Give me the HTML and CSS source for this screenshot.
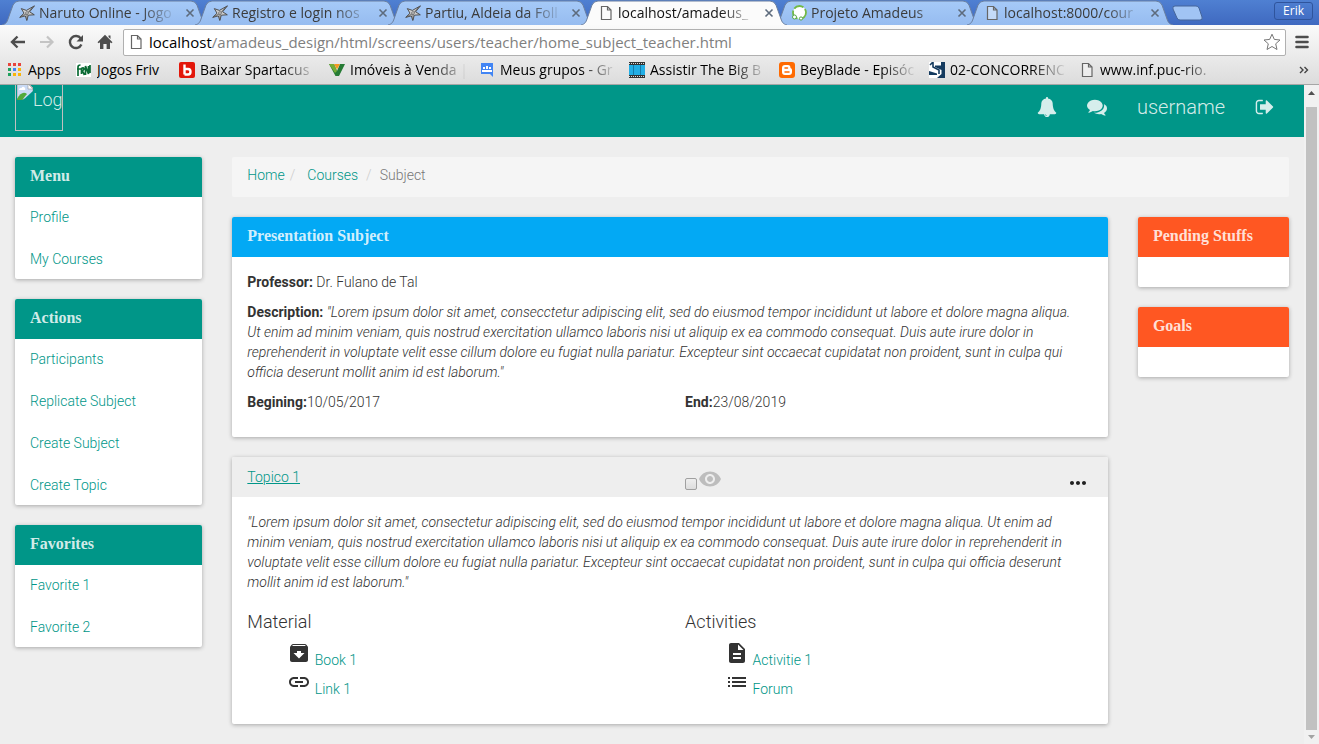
FILE: index.html
```html
<!DOCTYPE html>
<html lang="en">
<head>
<meta charset="utf-8">
<title>Home Subject Teacher</title>
<link rel="stylesheet" href="styles.css">
</head>
<body>
<svg class="defs" aria-hidden="true">
  <defs>
    <linearGradient id="tabfill" x1="0" y1="0" x2="0" y2="1"><stop offset="0" stop-color="#a6caf8"/><stop offset="1" stop-color="#96bcf0"/></linearGradient>
    <symbol id="tabshape" viewBox="0 0 206 25" preserveAspectRatio="none"><path d="M0 25C4 24 5 22 6 19L11 5Q13 1 17 1H189Q193 1 195 5L200 19C201 22 202 24 206 25"/></symbol>
    <symbol id="shuriken" viewBox="0 0 16 16"><path d="M15.500.8L10.600 6.800 15.300 9.800 9.300 10.200 7.800 15.500 6.300 10.900.700 12.400 5 8.200 2.300 3.600 7.400 5.400Z" fill="#ccc" stroke="#444" stroke-width=".9"/><path d="M15 1L8 8.500M8 15V9M1 12l6-3" stroke="#555" stroke-width=".8" fill="none"/><circle cx="8" cy="8" r="1.300" fill="#eee" stroke="#333" stroke-width=".6"/></symbol>
    <symbol id="page" viewBox="0 0 16 16"><path d="M3.500 1.500H9.500L13 5V14.500H3.500ZM9.500 1.500V5H13" fill="#fff" fill-opacity=".4" stroke="#666" stroke-width="1.200"/></symbol>
    <symbol id="close" viewBox="0 0 10 10"><path d="M1.500 1.500l7 7m0-7l-7 7" stroke="#5d6b7d" stroke-width="1.600"/></symbol>
  </defs>
</svg>

<header class="browser">
  <nav class="tabs">
    <div class="tab"><svg class="shape"><use href="#tabshape"/></svg><svg class="fav"><use href="#shuriken"/></svg><span class="tab-title">Naruto Online - Jogo</span><button class="close" aria-label="Close tab"><svg><use href="#close"/></svg></button></div>
    <div class="tab"><svg class="shape"><use href="#tabshape"/></svg><svg class="fav"><use href="#shuriken"/></svg><span class="tab-title">Registro e login nos</span><button class="close" aria-label="Close tab"><svg><use href="#close"/></svg></button></div>
    <div class="tab"><svg class="shape"><use href="#tabshape"/></svg><svg class="fav"><use href="#shuriken"/></svg><span class="tab-title">Partiu, Aldeia da Foll</span><button class="close" aria-label="Close tab"><svg><use href="#close"/></svg></button></div>
    <div class="tab active"><svg class="shape"><use href="#tabshape"/></svg><svg class="fav"><use href="#page"/></svg><span class="tab-title">localhost/amadeus_</span><button class="close" aria-label="Close tab"><svg><use href="#close"/></svg></button></div>
    <div class="tab"><svg class="shape"><use href="#tabshape"/></svg><svg class="fav" viewBox="0 0 16 16"><circle cx="8.500" cy="7.500" r="6.500" fill="#fff" stroke="#72b944" stroke-width="1.800" stroke-dasharray="10 2"/><circle cx="3.500" cy="12" r="2" fill="#fff" stroke="#58a94b"/><circle cx="10" cy="13.500" r="1.600" fill="#fff" stroke="#58a94b"/></svg><span class="tab-title">Projeto Amadeus</span><button class="close" aria-label="Close tab"><svg><use href="#close"/></svg></button></div>
    <div class="tab"><svg class="shape"><use href="#tabshape"/></svg><svg class="fav"><use href="#page"/></svg><span class="tab-title">localhost:8000/cour</span><button class="close" aria-label="Close tab"><svg><use href="#close"/></svg></button></div>
    <button class="newtab" aria-label="New tab"><svg viewBox="0 0 32 16"><path d="M3 1H24Q26 1 27 3L30 12Q31 15 28 15H8Q6 15 5 13L1 4Q0 1 3 1Z" fill="#a1c4f4" stroke="#45659a"/></svg></button>
    <button class="user">Erik</button>
  </nav>
  <div class="toolbar">
    <button class="tool" aria-label="Back"><svg viewBox="0 0 16 16"><path d="M15 8H2.500M7.500 2.500L2 8 7.500 13.500" fill="none" stroke="#4d4d4d" stroke-width="2.400"/></svg></button>
    <button class="tool" aria-label="Forward"><svg viewBox="0 0 16 16"><path d="M1 8H13M8 2.500L13.500 8 8 13.500" fill="none" stroke="#c4c4c4" stroke-width="2.200"/></svg></button>
    <button class="tool" aria-label="Reload"><svg viewBox="0 0 16 16"><path d="M12.800 4.500A6 6 0 1 0 13.400 10.500" fill="none" stroke="#4d4d4d" stroke-width="2.400"/><path d="M15 1V7.500H8.500Z" fill="#4d4d4d"/></svg></button>
    <button class="tool" aria-label="Home"><svg viewBox="0 0 16 16"><path d="M8 .8L15.500 8.200 14.300 9.300 13 8.200V15H9.600V10H6.400V15H3V8.200L1.700 9.300.500 8.200ZM11.500 1.500H13.500V5L11.500 3Z" fill="#4d4d4d"/></svg></button>
    <div class="omnibox">
      <svg class="fav"><use href="#page"/></svg>
      <label class="host" for="url">localhost</label>
      <input id="url" class="url" type="text" spellcheck="false" value="/amadeus_design/html/screens/users/teacher/home_subject_teacher.html">
      <button class="star" aria-label="Bookmark"><svg viewBox="0 0 18 18"><path d="M9 1.200L11.300 6.400 17 7 12.700 10.800 14 16.500 9 13.500 4 16.500 5.300 10.800 1 7 6.700 6.400Z" fill="#fff" stroke="#777"/></svg></button>
    </div>
    <button class="tool menu" aria-label="Menu"><svg viewBox="0 0 14 14"><path d="M1.500 2H12.500M1.500 7H12.500M1.500 12H12.500" stroke="#4d4d4d" stroke-width="2.600" stroke-linecap="round"/></svg></button>
  </div>
  <nav class="bookmarks">
    <a href="#" class="bm apps"><svg class="fav" viewBox="0 0 16 16"><path d="M1 1h3v3H1zM6 1h3v3H6zM11 1h3v3h-3z" fill="#e8453c"/><path d="M1 6h3v3H1zM1 11h3v3H1z" fill="#1fa15d"/><path d="M6 6h3v3H6z" fill="#4285f4"/><path d="M11 6h3v3h-3zM6 11h3v3H6zM11 11h3v3h-3z" fill="#f9b50b"/></svg><span>Apps</span></a>
    <a href="#" class="bm friv"><svg class="fav" viewBox="0 0 16 16"><path fill="#fff" d="M0 1h15v14H0z"/><path d="M2 14V5Q2 3 4.500 3M1 7H5M5.500 12V6.500Q7.500 5 8 7L6.500 9 8.500 13M9.500 13V4L12.500 12V4M14 3V11" fill="none" stroke="#0b6b35" stroke-width="1.700"/></svg><span>Jogos Friv</span></a>
    <a href="#" class="bm"><svg class="fav" viewBox="0 0 16 16"><rect width="16" height="16" rx="2" fill="#e3170a"/><path d="M5.500 2.500V12.500M5.500 7H9Q11.500 7 11.500 9.700T9 12.500H5.500" fill="none" stroke="#fff" stroke-width="2.400"/></svg><span>Baixar Spartacus</span></a>
    <a href="#" class="bm"><svg class="fav" viewBox="0 0 16 16"><path d="M0 2H5L8 9 11 2H16L10 14H6.500Z" fill="#267b35"/><path d="M0 2H5L8 9 6 11Z" fill="#74ad35"/><path d="M5 2H11L8 7.500Z" fill="#f39a21"/></svg><span>Imóveis à Venda |</span></a>
    <a href="#" class="bm"><svg class="fav" viewBox="0 0 16 16"><path d="M2 1H14V15L11 12H2Z" fill="#4285f4"/><path d="M4 5h2v2H4zM7 4h2v3H7zM10 5h2v2h-2zM3 8h10v2H3z" fill="#fff"/></svg><span>Meus grupos - Gr</span></a>
    <a href="#" class="bm"><svg class="fav" viewBox="0 0 16 16"><path d="M0 0H16V16H0Z" fill="#333"/><path d="M0 3H16V13H0Z" fill="#22aee5"/><path d="M0 1.500H16M0 14.500H16" stroke="#ddd" stroke-dasharray="1 1"/><path d="M4.500 3V13M11.500 3V13" stroke="#147aa9"/></svg><span>Assistir The Big B</span></a>
    <a href="#" class="bm"><svg class="fav" viewBox="0 0 16 16"><rect width="16" height="16" rx="3" fill="#ff6a00"/><path d="M6 3H9Q11.500 3 11.500 6 13 6.500 13 8V10Q13 13 10 13H6Q3 13 3 10V6Q3 3 6 3Z" fill="#fff"/><path d="M6 6H8.500M6 10H10" stroke="#ff6a00" stroke-width="1.500" stroke-linecap="round"/></svg><span>BeyBlade - Episóc</span></a>
    <a href="#" class="bm"><svg class="fav" viewBox="0 0 16 16"><path d="M0 0H16V16H0Z" fill="#fff"/><path d="M12 0h4v16H8L12.500 12V8L6 5V3.500H12ZM0 9L8 11.500V13H0Z" fill="#143a5e"/><path d="M1 3L4 0v5l6 3v4" fill="none" stroke="#143a5e" stroke-width="1.600"/></svg><span>02-CONCORRENC</span></a>
    <a href="#" class="bm"><svg class="fav"><use href="#page"/></svg><span>www.inf.puc-rio.</span></a>
    <button class="more" aria-label="More bookmarks"><svg viewBox="0 0 10 8"><path d="M1 1l3 3-3 3M5.500 1l3 3-3 3" fill="none" stroke="#444" stroke-width="1.400"/></svg></button>
  </nav>
</header>

<div class="viewport">
  <div class="page">
    <header class="navbar">
      <a class="logo" href="#" aria-label="Logo"><svg viewBox="0 0 16 16"><path d="M0-2H11L16 3V14H0Z" fill="#c9daf5" stroke="#aaa"/><path d="M2 5Q2 2.500 4.500 3 6 .500 8 3 9 5 7 5Z" fill="#fff"/><path d="M0 14Q5 5 10 9L5 15H0Z" fill="#52a93c"/><path d="M5 16L16 6V16Z" fill="#009688"/><path d="M11-1V4H16Z" fill="#fff" stroke="#999" stroke-width=".6"/></svg><span>Log</span></a>
      <nav class="navlinks">
        <a href="#" aria-label="Notifications"><svg viewBox="0 0 1792 1792"><path d="M912 1696q0-16-16-16-59 0-101.500-42.500t-42.500-101.500q0-16-16-16t-16 16q0 73 51.500 124.500t124.500 51.500q16 0 16-16zm816-288q0 52-38 90t-90 38h-448q0 106-75 181t-181 75-181-75-75-181h-448q-52 0-90-38t-38-90q50-42 91-88t85-119.500 74.500-158.500 50-206 19.500-260q0-152 117-282.500t307-158.500q-8-19-8-39 0-40 28-68t68-28 68 28 28 68q0 20-8 39 190 28 307 158.500t117 282.500q0 139 19.500 260t50 206 74.500 158.500 85 119.500 91 88z"/></svg></a>
        <a href="#" aria-label="Messages"><svg viewBox="0 0 1792 1792"><path d="M1408 768q0 139-94 257t-256.500 186.500-353.500 68.500q-86 0-176-16-124 88-278 128-36 9-86 16h-3q-11 0-20.500-8t-11.500-21q-1-3-1-6.500t.5-6.500 2-6l2.500-5 3.500-5.500 4-5 4.500-5 4-4.500q5-6 23-25t26-29.500 22.500-29 25-38.500 20.500-44q-124-72-195-177t-71-224q0-139 94-257t256.500-186.500 353.500-68.500 353.500 68.500 256.500 186.500 94 257zm384 256q0 120-71 224.500t-195 176.500q10 24 20.500 44t25 38.500 22.500 29 26 29.500 23 25q1 1 4 4.500t4.500 5 4 5 3.500 5.500l2.500 5 2 6 .5 6.500-1 6.500q-3 14-13 22t-22 7q-50-7-86-16-154-40-278-128-90 16-176 16-271 0-472-132 58 4 88 4 161 0 309-45t264-129q125-92 192-212t67-254q0-77-23-152 129 71 204 178t75 230z"/></svg></a>
        <a href="#">username</a>
        <a href="#" aria-label="Sign out"><svg viewBox="0 0 1792 1792"><path d="M704 1440q0 4 1 20t.5 26.500-3 23.500-10 19.500-20.500 6.500h-320q-119 0-203.500-84.500t-84.500-203.500v-704q0-119 84.500-203.500t203.500-84.500h320q13 0 22.500 9.500t9.500 22.500q0 4 1 20t.5 26.500-3 23.500-10 19.500-20.500 6.500h-320q-66 0-113 47t-47 113v704q0 66 47 113t113 47h312l11.500 1 11.500 3 8 5.500 7 9 2 13.500zm928-544q0 26-19 45l-544 544q-19 19-45 19t-45-19-19-45v-288h-448q-26 0-45-19t-19-45v-384q0-26 19-45t45-19h448v-288q0-26 19-45t45-19 45 19l544 544q19 19 19 45z"/></svg></a>
      </nav>
    </header>
    <div class="layout">
      <aside class="stack col">
        <section class="card"><h3 class="card-head green">Menu</h3><ul class="links"><li><a href="#">Profile</a></li><li><a href="#">My Courses</a></li></ul></section>
        <section class="card"><h3 class="card-head green">Actions</h3><ul class="links"><li><a href="#">Participants</a></li><li><a href="#">Replicate Subject</a></li><li><a href="#">Create Subject</a></li><li><a href="#">Create Topic</a></li></ul></section>
        <section class="card"><h3 class="card-head green">Favorites</h3><ul class="links"><li><a href="#">Favorite 1</a></li><li><a href="#">Favorite 2</a></li></ul></section>
      </aside>
      <div class="content">
        <div class="col">
          <ol class="breadcrumb"><li><a href="#">Home</a></li><li><a href="#">Courses</a></li><li>Subject</li></ol>
        </div>
        <div class="layout inner">
          <main class="stack col">
            <section class="card">
              <h3 class="card-head blue">Presentation Subject</h3>
              <div class="card-body">
                <p><b>Professor:</b> Dr. Fulano de Tal</p>
                <p><b>Description:</b> <i>"Lorem ipsum dolor sit amet, consecctetur adipiscing elit, sed do eiusmod tempor incididunt ut labore et dolore magna aliqua.<br>Ut enim ad minim veniam, quis nostrud exercitation ullamco laboris nisi ut aliquip ex ea commodo consequat. Duis aute irure dolor in<br>reprehenderit in voluptate velit esse cillum dolore eu fugiat nulla pariatur. Excepteur sint occaecat cupidatat non proident, sunt in culpa qui<br>officia deserunt mollit anim id est laborum."</i></p>
                <div class="halves"><p><b>Begining:</b>10/05/2017</p><p><b>End:</b>23/08/2019</p></div>
              </div>
            </section>
            <section class="card">
              <div class="topic-head halves">
                <a href="#">Topico 1</a>
                <div class="topic-tools">
                  <label class="visible"><input type="checkbox" aria-label="Visible"><svg viewBox="0 0 24 24"><path d="M12 4.500C7 4.500 2.730 7.610 1 12c1.730 4.390 6 7.500 11 7.500s9.270-3.110 11-7.500c-1.730-4.390-6-7.500-11-7.500zM12 17c-2.760 0-5-2.240-5-5s2.240-5 5-5 5 2.240 5 5-2.240 5-5 5zm0-8c-1.660 0-3 1.340-3 3s1.340 3 3 3 3-1.340 3-3-1.340-3-3-3z"/></svg></label>
                  <button class="dots" aria-label="Topic options"><svg viewBox="0 0 24 24"><path d="M6 10c-1.100 0-2 .9-2 2s.9 2 2 2 2-.9 2-2-.9-2-2-2zm12 0c-1.100 0-2 .9-2 2s.9 2 2 2 2-.9 2-2-.9-2-2-2zm-6 0c-1.100 0-2 .9-2 2s.9 2 2 2 2-.9 2-2-.9-2-2-2z"/></svg></button>
                </div>
              </div>
              <div class="card-body">
                <p><i>"Lorem ipsum dolor sit amet, consectetur adipiscing elit, sed do eiusmod tempor incididunt ut labore et dolore magna aliqua. Ut enim ad<br>minim veniam, quis nostrud exercitation ullamco laboris nisi ut aliquip ex ea commodo consequat. Duis aute irure dolor in reprehenderit in<br>voluptate velit esse cillum dolore eu fugiat nulla pariatur. Excepteur sint occaecat cupidatat non proident, sunt in culpa qui officia deserunt<br>mollit anim id est laborum."</i></p>
                <div class="halves">
                  <div>
                    <h4>Material</h4>
                    <ul class="resources">
                      <li><svg viewBox="0 0 24 24"><path d="M20.540 5.230l-1.390-1.680C18.880 3.210 18.470 3 18 3H6c-.47 0-.88.21-1.160.55L3.460 5.230C3.170 5.570 3 6.020 3 6.500V19c0 1.100.9 2 2 2h14c1.100 0 2-.9 2-2V6.500c0-.48-.17-.93-.46-1.270zM12 17.500L6.500 12H10v-2h4v2h3.500L12 17.500zM5.120 5l.81-1h12l.94 1H5.120z"/></svg> <a href="#">Book 1</a></li>
                      <li><svg viewBox="0 0 24 24"><path d="M3.900 12c0-1.710 1.390-3.100 3.100-3.100h4V7H7c-2.760 0-5 2.240-5 5s2.240 5 5 5h4v-1.900H7c-1.710 0-3.100-1.390-3.100-3.100zM8 13h8v-2H8v2zm9-6h-4v1.900h4c1.710 0 3.100 1.390 3.100 3.100s-1.390 3.100-3.100 3.100h-4V17h4c2.760 0 5-2.240 5-5s-2.240-5-5-5z"/></svg> <a href="#">Link 1</a></li>
                    </ul>
                  </div>
                  <div>
                    <h4>Activities</h4>
                    <ul class="resources">
                      <li><svg viewBox="0 0 24 24"><path d="M14 2H6c-1.100 0-1.990.9-1.990 2L4 20c0 1.100.89 2 1.990 2H18c1.100 0 2-.9 2-2V8l-6-6zm2 16H8v-2h8v2zm0-4H8v-2h8v2zm-3-5V3.500L18.500 9H13z"/></svg> <a href="#">Activitie 1</a></li>
                      <li><svg viewBox="0 0 24 24"><path d="M3 13h2v-2H3v2zm0 4h2v-2H3v2zm0-8h2V7H3v2zm4 4h14v-2H7v2zm0 4h14v-2H7v2zM7 7v2h14V7H7z"/></svg> <a href="#">Forum</a></li>
                    </ul>
                  </div>
                </div>
              </div>
            </section>
          </main>
          <aside class="stack col">
            <section class="card"><h3 class="card-head orange">Pending Stuffs</h3><div class="card-body"></div></section>
            <section class="card"><h3 class="card-head orange">Goals</h3><div class="card-body"></div></section>
          </aside>
        </div>
      </div>
    </div>
  </div>
  <div class="scrollbar" aria-hidden="true">
    <svg viewBox="0 0 7 4"><path d="M0 4L3.500 0 7 4Z"/></svg>
    <div class="thumb"></div>
    <svg class="end" viewBox="0 0 7 4"><path d="M0 0L3.500 4 7 0Z"/></svg>
  </div>
</div>
</body>
</html>
```
FILE: styles.css
```css
* { box-sizing: border-box; }
body {
  margin: 0;
  height: 100vh;
  display: flex;
  flex-direction: column;
  overflow: hidden;
  background: #eee;
  color: #333;
  font: 300 14px/20px Roboto, "Liberation Sans", sans-serif;
}
.defs { position: absolute; width: 0; height: 0; }
button { border: 0; padding: 0; background: none; font: inherit; color: inherit; }
svg { flex: none; }
a { color: #009688; text-decoration: none; }
h3, h4, p, ul, ol { margin: 0; padding: 0; }
ul, ol { list-style: none; }
b { font-weight: 700; }
i { font-family: "Roboto Light", Roboto, sans-serif; }

/* Browser frame */
.browser {
  flex: none;
  font: 400 14px/20px "Open Sans", "Noto Sans", sans-serif;
  color: #000;
  background: linear-gradient(#fbfbfb 24px, #dcdcdc);
  border-bottom: 1px solid #a6a6a6;
}
.tabs {
  display: flex;
  height: 25px;
  padding-left: 2px;
  background: linear-gradient(#4f80d2, #3f69c0);
}
.tab {
  position: relative;
  flex: 0 1 206px;
  min-width: 0;
  display: flex;
  align-items: center;
  gap: 4px;
  padding: 1px 9px 0 17px;
  margin-right: -13px;
  color: #3b3b3b;
}
.shape {
  position: absolute;
  inset: 0;
  width: 100%;
  height: 100%;
  fill: url(#tabfill);
  stroke: #6a7f9f;
}
.tab.active { z-index: 1; color: #111; }
.active .shape { fill: #fbfbfb; }
.fav { position: relative; width: 16px; height: 16px; }
.tab-title, .bm span {
  position: relative;
  flex: 1;
  min-width: 0;
  overflow: hidden;
  white-space: nowrap;
  mask-image: linear-gradient(to left, transparent, #000 36px);
}
.close { position: relative; display: flex; width: 18px; justify-content: center; }
.close svg { width: 10px; height: 10px; }
.newtab { display: flex; align-items: center; margin-left: 12px; }
.newtab svg { width: 32px; height: 16px; }
.user {
  align-self: flex-start;
  margin: 2px 6px 0 auto;
  padding: 0 8px;
  height: 18px;
  font-size: 12px;
  line-height: 16px;
  color: #fff;
  border: 1px solid #2f549c;
  border-radius: 3px;
}
.toolbar { display: flex; align-items: center; height: 34px; padding: 0 10px; gap: 13px; }
.tool { display: flex; }
.tool svg { width: 16px; height: 16px; }
.menu svg { width: 14px; height: 14px; }
.menu { margin-left: -4px; }
.omnibox {
  flex: 1;
  display: flex;
  align-items: center;
  height: 27px;
  padding: 0 4px;
  margin-left: -3px;
  background: #fff;
  border: 1px solid #b0b0b0;
  border-radius: 2px;
  font-size: 15px;
}
.host { margin-left: 5px; }
.url {
  flex: 1;
  min-width: 0;
  border: 0;
  padding: 0;
  outline: 0;
  background: none;
  font: inherit;
  color: #808080;
}
.star { display: flex; }
.star svg { width: 18px; height: 18px; }
.bookmarks { display: flex; align-items: flex-start; height: 25px; padding: 1px 10px 0 7px; }
.bm { flex: 0 1 150px; min-width: 0; display: flex; align-items: center; gap: 5px; padding-right: 12px; color: #000; }
.bm.apps { flex: 0 0 69px; padding: 0; }
.bm.friv { flex: 0 0 103px; padding: 0; }
.apps span, .friv span { mask-image: none; }
.more { display: flex; height: 20px; align-items: center; margin-left: auto; }
.more svg { width: 10px; height: 8px; }

/* Page */
.viewport { flex: 1; min-height: 0; display: flex; }
.page { flex: 1; min-width: 0; overflow: hidden; }
.scrollbar {
  width: 15px;
  flex: none;
  display: flex;
  flex-direction: column;
  align-items: center;
  padding: 6px 0 5px;
  background: #f1f1f1;
  fill: #505050;
}
.scrollbar svg { width: 7px; height: 4px; }
.scrollbar .end { fill: #a3a3a3; }
.thumb { flex: 1; width: 11px; margin: 12px 0 5px; background: #c1c1c1; }

.navbar {
  display: flex;
  justify-content: space-between;
  align-items: flex-start;
  height: 52px;
  padding: 0 15px;
  background: #009688;
  font-size: 20px;
}
.navbar a { color: rgba(255, 255, 255, .84); }
.logo {
  display: flex;
  width: 48px;
  height: 46px;
  padding-left: 1px;
  overflow: hidden;
  border: 1px solid #c0c0c0;
  border-top: 0;
  font-size: 18px;
  line-height: 30px;
}
.logo svg { width: 16px; height: 16px; }
.navlinks { display: flex; align-items: center; gap: 30px; height: 44px; padding-right: 14px; }
.navlinks a { display: flex; }
.navlinks svg { width: 20px; height: 20px; fill: rgba(255, 255, 255, .84); }

.layout { display: grid; grid-template-columns: 2fr 10fr; padding-top: 20px; }
.layout.inner { grid-template-columns: 10fr 2fr; }
.layout > * { min-width: 0; }
.col { padding: 0 15px; }
.stack { display: flex; flex-direction: column; gap: 20px; }

.card { background: #fff; border-radius: 2px; box-shadow: 0 1px 4px rgba(0, 0, 0, .3); }
.card-head {
  padding: 9px 15px 11px;
  border-radius: 2px 2px 0 0;
  color: rgba(255, 255, 255, .84);
  font: bold 16px/20px "Liberation Serif", serif;
}
.green { background: #009688; }
.blue { background: #03a9f4; }
.orange { background: #ff5722; }
.card-body { padding: 15px; }
.card-body p { margin-bottom: 10px; }
.links { display: flex; flex-direction: column; gap: 2px; }
.links li { padding: 10px 15px; }

.breadcrumb { display: flex; height: 40px; padding: 8px 15px; background: #f5f5f5; border-radius: 2px; color: #777; }
.breadcrumb li + li::before { content: "/"; color: #ccc; padding: 0 12px 0 5px; }
.breadcrumb li:last-child::before { padding: 0 8px; }

.halves { display: grid; grid-template-columns: 1fr 1fr; column-gap: 30px; }
.topic-head { height: 40px; padding: 10px 15px 0; background: #eee; border-radius: 2px 2px 0 0; }
.topic-head > a { justify-self: start; text-decoration: underline; }
.topic-tools { display: flex; justify-content: space-between; align-items: flex-start; }
.visible { display: flex; align-items: flex-end; fill: #bdbdbd; }
.visible input {
  appearance: none;
  width: 12px;
  height: 12px;
  margin: 0 1px 1px 0;
  border: 1px solid #a0a0a0;
  border-radius: 2px;
  background: linear-gradient(#eee, #ddd);
}
.visible svg, .dots svg { width: 24px; height: 24px; }
.dots { display: flex; padding: 4px 3px 0 0; fill: #212121; }

h4 { margin: 10px 0 9px; font-size: 18px; line-height: 20px; font-weight: 300; }
.resources { padding-left: 40px; margin-bottom: 10px; }
.resources svg { width: 24px; height: 24px; fill: #333; }
```
